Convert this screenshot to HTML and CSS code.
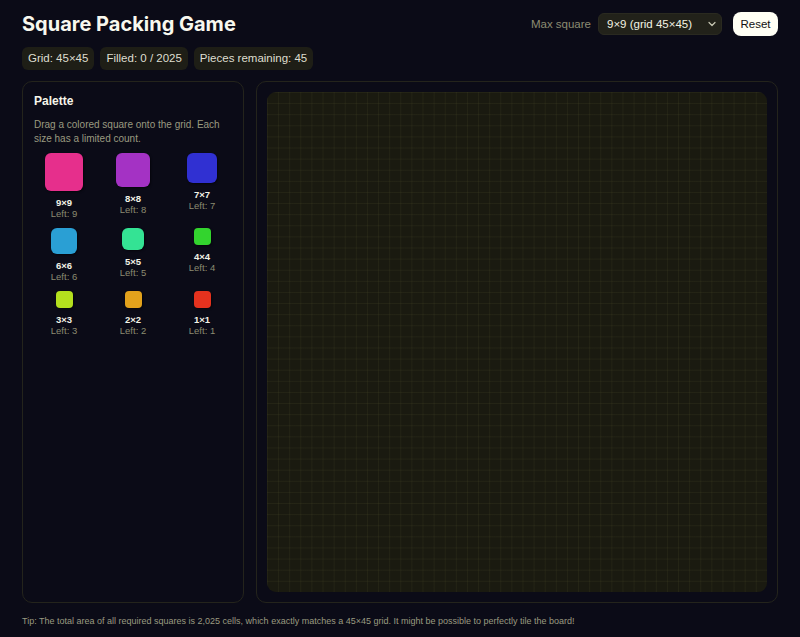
FILE: index.html
```html
<!DOCTYPE html>
<html lang="en">
<head>
<meta charset="utf-8">
<title>Square Packing Game</title>
<link rel="stylesheet" href="styles.css">
</head>
<body>
<div class="app">
  <header class="top">
    <div class="top-left">
      <h1 class="title">Square Packing Game</h1>
      <div class="stats">
        <span class="chip">Grid: 45×45</span>
        <span class="chip">Filled: 0 / 2025</span>
        <span class="chip">Pieces remaining: 45</span>
      </div>
    </div>
    <div class="controls">
      <label class="ctl-label" for="max">Max square</label>
      <span class="select-wrap">
        <select id="max" class="select">
          <option>9×9 (grid 45×45)</option>
        </select>
        <svg class="chev" width="8" height="6" viewBox="0 0 8 6"><path d="M1 1.5 L4 4.5 L7 1.5" fill="none" stroke="#c8c8b4" stroke-width="1.2" stroke-linecap="round" stroke-linejoin="round"/></svg>
      </span>
      <button class="reset">Reset</button>
    </div>
  </header>

  <main class="main">
    <section class="panel palette">
      <h2 class="pal-title">Palette</h2>
      <p class="pal-desc">Drag a colored square onto the grid. Each size has a limited count.</p>
      <div class="pal-grid">
        <div class="piece"><div class="sq" style="width:38px;height:38px;background:#e62f8c"></div><div class="p-name">9×9</div><div class="p-left">Left: 9</div></div>
        <div class="piece"><div class="sq" style="width:34px;height:34px;background:#a432c4"></div><div class="p-name">8×8</div><div class="p-left">Left: 8</div></div>
        <div class="piece"><div class="sq" style="width:30px;height:30px;background:#3030d2"></div><div class="p-name">7×7</div><div class="p-left">Left: 7</div></div>
        <div class="piece"><div class="sq" style="width:26px;height:26px;background:#2a9fd4"></div><div class="p-name">6×6</div><div class="p-left">Left: 6</div></div>
        <div class="piece"><div class="sq" style="width:22px;height:22px;background:#34e394"></div><div class="p-name">5×5</div><div class="p-left">Left: 5</div></div>
        <div class="piece"><div class="sq sm" style="width:17px;height:17px;background:#33d42e"></div><div class="p-name">4×4</div><div class="p-left">Left: 4</div></div>
        <div class="piece"><div class="sq sm" style="width:17px;height:17px;background:#b4e01e"></div><div class="p-name">3×3</div><div class="p-left">Left: 3</div></div>
        <div class="piece"><div class="sq sm" style="width:17px;height:17px;background:#e3a21c"></div><div class="p-name">2×2</div><div class="p-left">Left: 2</div></div>
        <div class="piece"><div class="sq sm" style="width:17px;height:17px;background:#e5321e"></div><div class="p-name">1×1</div><div class="p-left">Left: 1</div></div>
      </div>
    </section>
    <section class="panel board-panel">
      <div class="board"></div>
    </section>
  </main>

  <p class="tip">Tip: The total area of all required squares is 2,025 cells, which exactly matches a 45×45 grid. It might be possible to perfectly tile the board!</p>
</div>
</body>
</html>
```

FILE: styles.css
```css
* { box-sizing: border-box; }
html, body { margin: 0; padding: 0; }
body {
  background: #0b0b17;
  color: #f4f4e6;
  font-family: "Liberation Sans", Arial, sans-serif;
  width: 800px;
  height: 637px;
  overflow: hidden;
}
.app { padding: 11px 22px 0 22px; }
.top {
  display: flex;
  justify-content: space-between;
  align-items: flex-start;
}
.title {
  margin: 0;
  font-family: Inter, "Liberation Sans", sans-serif;
  font-size: 20px;
  font-weight: 700;
  line-height: 26px;
  color: #f8f8ee;
}
.stats {
  display: flex;
  gap: 6px;
  margin-top: 10px;
}
.chip {
  background: #1e1e16;
  color: #deded0;
  font-size: 11.5px;
  line-height: 23px;
  height: 23px;
  padding: 0 6px;
  border-radius: 6px;
}
.controls {
  display: flex;
  align-items: center;
  margin-top: 1px;
}
.ctl-label {
  color: #8c8c72;
  font-size: 11.5px;
  margin-right: 7px;
}
.select-wrap { position: relative; display: inline-block; margin-right: 11px; }
.select {
  appearance: none;
  -webkit-appearance: none;
  display: block;
  background: #22221a;
  color: #f2f2e4;
  border: 1px solid #2a2a20;
  border-radius: 6px;
  font-family: inherit;
  font-size: 11.5px;
  height: 22px;
  width: 124px;
  padding: 0 18px 0 8px;
  outline: none;
}
.chev { position: absolute; right: 6px; top: 8px; pointer-events: none; }
.reset {
  background: #fffff4;
  color: #111;
  border: none;
  border-radius: 8px;
  font-family: inherit;
  font-size: 11.5px;
  height: 24px;
  width: 45px;
  padding: 0;
}
.main {
  display: flex;
  gap: 12px;
  margin-top: 11px;
}
.panel {
  border: 1px solid #24241c;
  border-radius: 10px;
}
.palette {
  width: 222px;
  padding: 11px 11px;
}
.pal-title {
  margin: 0;
  font-size: 12px;
  font-weight: 700;
  line-height: 16px;
  color: #f6f6ea;
}
.pal-desc {
  margin: 9px 0 0 0;
  font-size: 10px;
  line-height: 14px;
  color: #9a9a80;
}
.pal-grid {
  display: grid;
  grid-template-columns: repeat(3, 60px);
  column-gap: 9px;
  row-gap: 9px;
  margin-top: 7px;
}
.piece {
  display: flex;
  flex-direction: column;
  align-items: center;
}
.sq {
  border-radius: 6px;
  box-shadow: 1px 1px 2px rgba(0,0,0,0.5);
  margin-bottom: 6px;
}
.sq.sm { border-radius: 4px; }
.p-name {
  font-size: 9.5px;
  font-weight: 700;
  line-height: 11px;
  color: #f2f2e6;
}
.p-left {
  font-size: 9.5px;
  line-height: 11px;
  color: #8c8c72;
}
.board-panel {
  width: 522px;
  height: 522px;
  padding: 10px;
}
.board {
  width: 500px;
  height: 500px;
  border-radius: 9px;
  background-color: #1a1a10;
  background-image:
    linear-gradient(to right, rgba(110,110,60,0.12) 1px, transparent 1px),
    linear-gradient(to bottom, rgba(110,110,60,0.12) 1px, transparent 1px);
  background-size: 11.111px 11.111px;
}
.tip {
  margin: 11px 0 0 0;
  font-size: 9px;
  line-height: 14px;
  color: #9a9a80;
}
```
